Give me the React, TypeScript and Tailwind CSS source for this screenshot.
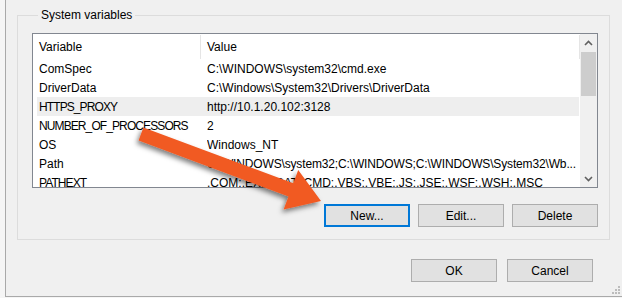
import React from "react";

const rows: { name: string; value: string; sel?: boolean; caps?: boolean; tight?: boolean }[] = [
  { name: "ComSpec", value: "C:\\WINDOWS\\system32\\cmd.exe" },
  { name: "DriverData", value: "C:\\Windows\\System32\\Drivers\\DriverData" },
  { name: "HTTPS_PROXY", value: "http://10.1.20.102:3128", sel: true, caps: true },
  { name: "NUMBER_OF_PROCESSORS", value: "2", caps: true },
  { name: "OS", value: "Windows_NT" },
  { name: "Path", value: "C:\\WINDOWS\\system32;C:\\WINDOWS;C:\\WINDOWS\\System32\\Wb...", tight: true },
  { name: "PATHEXT", value: ".COM;.EXE;.BAT;.CMD;.VBS;.VBE;.JS;.JSE;.WSF;.WSH;.MSC", caps: true },
];

function Btn({ label, focused }: { label: string; focused?: boolean }) {
  return (
    <div
      className={
        "w-[86px] h-[23px] flex items-center justify-center bg-[#e1e1e1] text-[12px] text-black " +
        (focused ? "border-2 border-[#0078d7]" : "border border-[#adadad]")
      }
    >
      {label}
    </div>
  );
}

function Chevron({ up }: { up?: boolean }) {
  return (
    <svg width="9" height="6" viewBox="0 0 9 6">
      <path
        d={up ? "M1 5 L4.5 1.5 L8 5" : "M1 1 L4.5 4.5 L8 1"}
        fill="none"
        stroke="#606060"
        strokeWidth="1.6"
      />
    </svg>
  );
}

export default function App() {
  return (
    <div className="relative w-[622px] h-[298px] bg-[#f5f5f5] overflow-hidden font-['Liberation_Sans',Arial,sans-serif] text-[12px] text-black">
      <div className="ml-[5px] h-[297px] bg-[#f0f0f0] border-l border-b border-[#a9a9a9] flex flex-col">
        <fieldset className="ml-[11px] mt-[7px] w-[593px] min-w-0 border border-[#dcdcdc] pl-[14px] pr-[11px] pb-[12px]">
          <legend className="ml-[6px] px-[3px] leading-[16px]">System variables</legend>
          <div className="mt-[10px] w-[566px] h-[155px] border border-[#828790] bg-white flex overflow-hidden">
            <div className="flex-1 min-w-0 flex flex-col overflow-hidden">
              <div className="h-[25px] flex shrink-0">
                <div className="w-[167px] pl-[6px] flex items-center">Variable</div>
                <div className="w-px mt-[1px] h-[24px] bg-[#e5e5e5]" />
                <div className="flex-1 pl-[6px] flex items-center">Value</div>
                <div className="w-px mt-[1px] h-[24px] bg-[#e5e5e5]" />
              </div>
              {rows.map((r) => (
                <div
                  key={r.name}
                  className={
                    "h-[19px] shrink-0 ml-[4px] mr-[1px] flex items-center whitespace-nowrap " +
                    (r.sel ? "bg-[#eeeeee]" : "")
                  }
                >
                  <div
                    className={
                      "w-[170px] shrink-0 pl-[2px] " + (r.caps ? "tracking-[-0.9px]" : "")
                    }
                  >
                    {r.name}
                  </div>
                  <div
                    className={
                      "flex-1 min-w-0 overflow-hidden " + (r.tight ? "tracking-[-0.15px]" : "")
                    }
                  >
                    {r.value}
                  </div>
                </div>
              ))}
            </div>
            <div className="w-[17px] shrink-0 bg-[#f0f0f0] flex flex-col">
              <div className="h-[17px] flex items-center justify-center">
                <Chevron up />
              </div>
              <div className="mx-[1px] mt-[1px] h-[44px] bg-[#cdcdcd]" />
              <div className="flex-1" />
              <div className="h-[17px] flex items-center justify-center">
                <Chevron />
              </div>
            </div>
          </div>
          <div className="mt-[16px] flex justify-end gap-[8px]">
            <Btn label="New..." focused />
            <Btn label="Edit..." />
            <Btn label="Delete" />
          </div>
        </fieldset>
        <div className="mt-[19px] pr-[29px] flex justify-end gap-[10px]">
          <Btn label="OK" />
          <Btn label="Cancel" />
        </div>
        <div className="flex-1 flex justify-end items-end pr-[2px] pb-[2px]">
          <svg width="8" height="8" viewBox="0 0 8 8">
            <rect x="6" y="0" width="2" height="2" fill="#bcbcbc" />
            <rect x="3" y="3" width="2" height="2" fill="#bcbcbc" />
            <rect x="6" y="3" width="2" height="2" fill="#bcbcbc" />
            <rect x="0" y="6" width="2" height="2" fill="#bcbcbc" />
            <rect x="3" y="6" width="2" height="2" fill="#bcbcbc" />
            <rect x="6" y="6" width="2" height="2" fill="#bcbcbc" />
          </svg>
        </div>
      </div>
      <svg
        className="absolute inset-0 pointer-events-none"
        width="622"
        height="298"
        viewBox="0 0 622 298"
      >
        <defs>
          <filter id="sh" x="-20%" y="-40%" width="140%" height="180%">
            <feDropShadow dx="-2" dy="3" stdDeviation="2.5" floodColor="#000" floodOpacity="0.5" />
          </filter>
        </defs>
        <polygon
          points="143.4,127.4 293.3,183.2 298.2,170.1 321,201 283.6,209.5 288.5,196.4 138.6,140.6"
          fill="#f15a24"
          filter="url(#sh)"
        />
      </svg>
    </div>
  );
}
